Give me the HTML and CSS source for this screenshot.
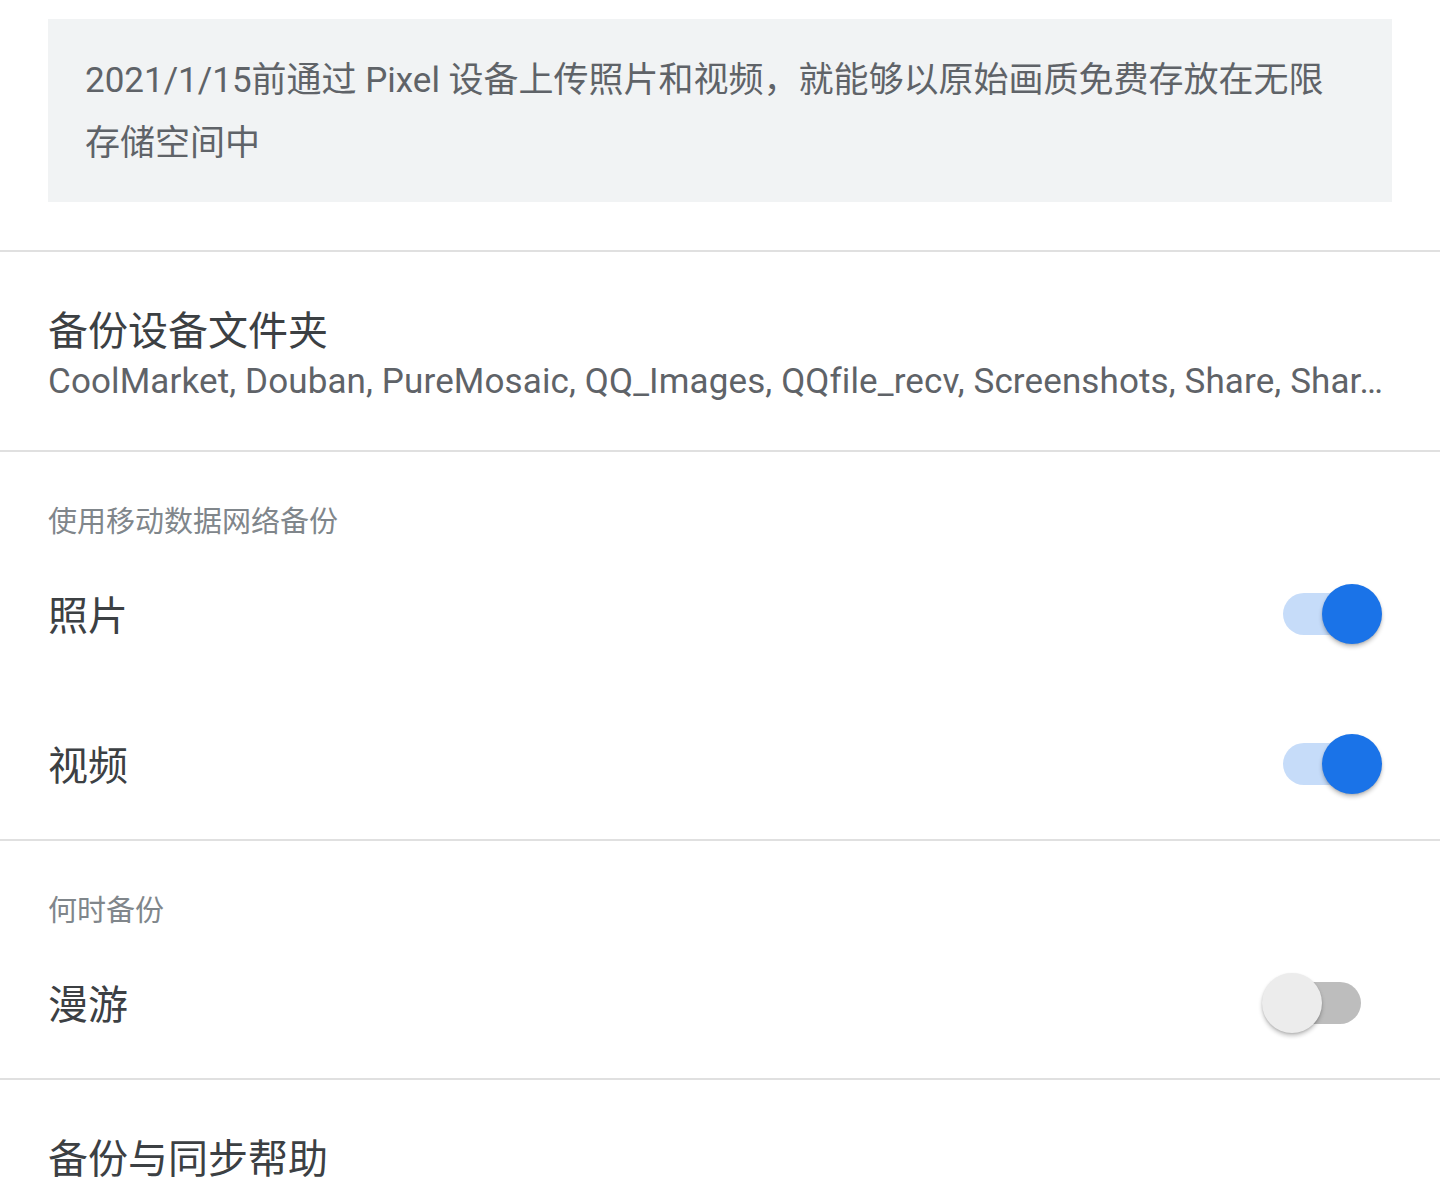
FILE: index.html
```html
<!DOCTYPE html>
<html lang="zh-CN">
<head>
<meta charset="utf-8">
<title>备份与同步</title>
<link rel="stylesheet" href="styles.css">
</head>
<body>
<div class="page">
  <div class="notice-wrap">
    <div class="notice">2021/1/15前通过 Pixel 设备上传照片和视频，就能够以原始画质免费存放在无限存储空间中</div>
  </div>
  <div class="divider"></div>
  <div class="item two-line">
    <div class="item-title">备份设备文件夹</div>
    <div class="item-sub">CoolMarket, Douban, PureMosaic, QQ_Images, QQfile_recv, Screenshots, Share, Shar…</div>
  </div>
  <div class="divider"></div>
  <div class="section-header">使用移动数据网络备份</div>
  <div class="row">
    <div class="item-title">照片</div>
    <div class="switch on"><span class="track"></span><span class="thumb"></span></div>
  </div>
  <div class="row">
    <div class="item-title">视频</div>
    <div class="switch on"><span class="track"></span><span class="thumb"></span></div>
  </div>
  <div class="divider"></div>
  <div class="section-header">何时备份</div>
  <div class="row">
    <div class="item-title">漫游</div>
    <div class="switch off"><span class="track"></span><span class="thumb"></span></div>
  </div>
  <div class="divider"></div>
  <div class="item help">
    <div class="item-title">备份与同步帮助</div>
  </div>
</div>
</body>
</html>
```
FILE: styles.css
```css
html, body {
  margin: 0;
  padding: 0;
  background: #ffffff;
}

body {
  font-family: Roboto, "Noto Sans CJK SC", "Noto Sans", sans-serif;
  overflow: hidden;
}

.page {
  width: 1440px;
  padding-top: 19px;
}

.notice-wrap {
  padding: 0 48px 48px 48px;
}

.notice {
  background: #f1f3f4;
  color: #5f6368;
  font-size: 35px;
  line-height: 63px;
  padding: 30px 48px 27px 37px;
  height: 126px;
}

.divider {
  height: 2px;
  background: #e0e0e0;
}

.item {
  padding: 0 48px;
}

.two-line {
  padding-top: 55px;
  padding-bottom: 43px;
}

.item-title {
  font-size: 40px;
  line-height: 50px;
  color: #3c4043;
}

.item-sub {
  font-size: 35px;
  line-height: 50px;
  letter-spacing: 0.12px;
  color: #5f6368;
  white-space: nowrap;
}

.section-header {
  padding: 53px 48px 0 48px;
  font-size: 29px;
  line-height: 34px;
  color: #80868b;
}

.row {
  height: 150px;
  padding: 0 58px 0 48px;
  display: flex;
  align-items: center;
  justify-content: space-between;
}

.row .item-title {
  padding-top: 5px;
}

.help {
  padding-top: 55px;
  padding-bottom: 37px;
}

.switch {
  position: relative;
  width: 120px;
  height: 60px;
  flex: none;
}

.switch .track {
  position: absolute;
  left: 21px;
  top: 9px;
  width: 78px;
  height: 42px;
  border-radius: 21px;
}

.switch .thumb {
  position: absolute;
  top: 0;
  width: 60px;
  height: 60px;
  border-radius: 50%;
  box-shadow: 0 3px 4px rgba(0, 0, 0, 0.22), 0 1px 2px rgba(0, 0, 0, 0.12);
}

.switch.on .track {
  background: #c6dcf9;
}

.switch.on .thumb {
  left: 60px;
  background: #1a73e8;
}

.switch.off .track {
  background: #bdbdbd;
}

.switch.off .thumb {
  left: 0;
  background: #ececec;
}
```
